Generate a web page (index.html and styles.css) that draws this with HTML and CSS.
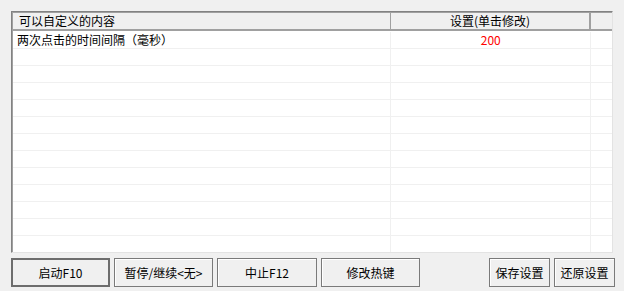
FILE: index.html
```html
<!DOCTYPE html>
<html lang="zh-CN">

<head>
    <meta charset="UTF-8">
    <title>设置</title>
    <link rel="stylesheet" href="styles.css">
</head>

<body>
    <div class="win">
        <div class="list">
            <div class="head">
                <div class="c1">可以自定义的内容</div>
                <div class="c2">设置(单击修改)</div>
                <div class="c3"></div>
            </div>
            <div class="row">
                <div class="c1">两次点击的时间间隔（毫秒）</div>
                <div class="c2 val">200</div>
                <div class="c3"></div>
            </div>
            <div class="row"><div class="c1"></div><div class="c2"></div><div class="c3"></div></div>
            <div class="row"><div class="c1"></div><div class="c2"></div><div class="c3"></div></div>
            <div class="row"><div class="c1"></div><div class="c2"></div><div class="c3"></div></div>
            <div class="row"><div class="c1"></div><div class="c2"></div><div class="c3"></div></div>
            <div class="row"><div class="c1"></div><div class="c2"></div><div class="c3"></div></div>
            <div class="row"><div class="c1"></div><div class="c2"></div><div class="c3"></div></div>
            <div class="row"><div class="c1"></div><div class="c2"></div><div class="c3"></div></div>
            <div class="row"><div class="c1"></div><div class="c2"></div><div class="c3"></div></div>
            <div class="row"><div class="c1"></div><div class="c2"></div><div class="c3"></div></div>
            <div class="row"><div class="c1"></div><div class="c2"></div><div class="c3"></div></div>
            <div class="row"><div class="c1"></div><div class="c2"></div><div class="c3"></div></div>
            <div class="row"><div class="c1"></div><div class="c2"></div><div class="c3"></div></div>
        </div>

        <div class="bar">
            <button class="btn def w99">启动F10</button>
            <button class="btn w99">暂停/继续&lt;无&gt;</button>
            <button class="btn w100">中止F12</button>
            <button class="btn w99">修改热键</button>
            <button class="btn w61 push">保存设置</button>
            <button class="btn w61">还原设置</button>
        </div>
    </div>
</body>

</html>
```

FILE: styles.css
```css
body {
    margin: 0;
    background: #f0f0f0;
    font-family: "Noto Sans CJK SC", "DejaVu Sans", sans-serif;
    font-size: 12px;
    color: #000;
}

.win {
    width: 624px;
    height: 291px;
    padding: 11px 9px 0 11px;
    box-sizing: border-box;
}

/* 列表框 */
.list {
    width: 602px;
    height: 242px;
    box-sizing: border-box;
    border: 1px solid #828282;
    border-right-color: #e3e3e3;
    border-bottom-color: #e3e3e3;
    box-shadow: inset 1px 1px 0 #a0a0a0;
    background: #fff;
    overflow: hidden;
    padding: 1px 0 0 1px;
}

.head,
.row {
    display: flex;
}

.c1 {
    width: 378px;
    padding-left: 5px;
    box-sizing: border-box;
    white-space: nowrap;
}

.c2 {
    width: 200px;
    text-align: center;
}

.c3 {
    width: 21px;
}

.head {
    height: 16px;
    line-height: 15px;
    background: #f0f0f0;
    border-bottom: 2px solid #a0a0a0;
}

.head .c1 {
    padding-left: 6px;
    border-right: 1px solid #a0a0a0;
}

.head .c2 {
    border-right: 2px solid #a0a0a0;
    box-sizing: border-box;
    width: 200px;
}

.row {
    height: 16px;
    line-height: 16px;
    border-bottom: 1px solid #f0f0f0;
}

.row .c1 {
    width: 379px;
    padding-left: 4px;
    border-right: 1px solid #f0f0f0;
}

.row .c2 {
    width: 199px;
    border-right: 1px solid #f0f0f0;
}

.head + .row {
    margin-top: 1px;
}

.val {
    color: #ff0000;
}

/* 按钮 */
.bar {
    display: flex;
    gap: 4px;
    margin-top: 5px;
}

.btn {
    height: 29px;
    font-family: inherit;
    font-size: 12px;
    color: #000;
    background: #f0f0f0;
    border: 1px solid #7a7a7a;
    box-shadow: inset 1px 1px 0 #fff;
    padding: 0;
    margin: 0;
}

.btn.def {
    border: 2px solid #6d6d6d;
    box-shadow: none;
}

.w99 {
    width: 99px;
}

.w100 {
    width: 100px;
}

.w61 {
    width: 61px;
}

.push {
    margin-left: auto;
}
```
